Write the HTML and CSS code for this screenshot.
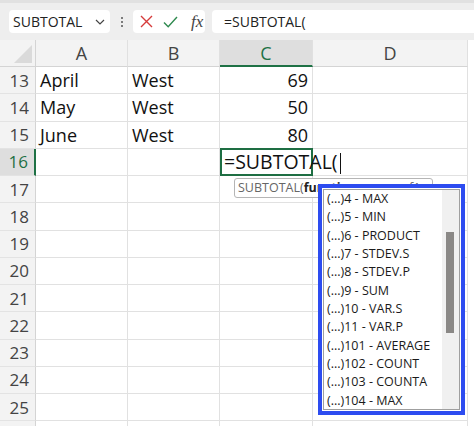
FILE: index.html
```html
<!DOCTYPE html>
<html lang="en">
<head>
    <meta charset="UTF-8">
    <meta name="viewport" content="width=device-width, initial-scale=1.0">
    <title>SUBTOTAL</title>
    <link rel="stylesheet" href="styles.css">
</head>
<body>
    <div class="toolbar">
        <div class="name-box">
            <span>SUBTOTAL</span>
            <svg class="chevron" width="10" height="6" viewBox="0 0 10 6"><path d="M1 1l4 4 4-4" fill="none" stroke="#444" stroke-width="1.2"/></svg>
        </div>
        <div class="grip">
            <span></span><span></span><span></span>
        </div>
        <div class="fx-box">
            <svg width="13" height="13" viewBox="0 0 13 13"><path d="M1 1l11 11M12 1L1 12" fill="none" stroke="#d63b3b" stroke-width="1.4"/></svg>
            <svg width="15" height="12" viewBox="0 0 15 12"><path d="M1 6.5l4.2 4.3L14 1" fill="none" stroke="#2f8a4f" stroke-width="1.4"/></svg>
            <span class="fx">fx</span>
        </div>
        <div class="formula">=SUBTOTAL(</div>
    </div>

    <div class="sheet">
        <div class="corner"><div class="tri"></div></div>
        <div class="col-head">A</div>
        <div class="col-head">B</div>
        <div class="col-head selected">C</div>
        <div class="col-head">D</div>

        <div class="row-head">13</div><div class="cell">April</div><div class="cell">West</div><div class="cell num">69</div><div class="cell"></div>
        <div class="row-head">14</div><div class="cell">May</div><div class="cell">West</div><div class="cell num">50</div><div class="cell"></div>
        <div class="row-head">15</div><div class="cell">June</div><div class="cell">West</div><div class="cell num">80</div><div class="cell"></div>
        <div class="row-head selected">16</div><div class="cell"></div><div class="cell"></div><div class="cell active">=SUBTOTAL(<span class="caret"></span></div><div class="cell"></div>
        <div class="row-head">17</div><div class="cell"></div><div class="cell"></div><div class="cell"></div><div class="cell"></div>
        <div class="row-head">18</div><div class="cell"></div><div class="cell"></div><div class="cell"></div><div class="cell"></div>
        <div class="row-head">19</div><div class="cell"></div><div class="cell"></div><div class="cell"></div><div class="cell"></div>
        <div class="row-head">20</div><div class="cell"></div><div class="cell"></div><div class="cell"></div><div class="cell"></div>
        <div class="row-head">21</div><div class="cell"></div><div class="cell"></div><div class="cell"></div><div class="cell"></div>
        <div class="row-head">22</div><div class="cell"></div><div class="cell"></div><div class="cell"></div><div class="cell"></div>
        <div class="row-head">23</div><div class="cell"></div><div class="cell"></div><div class="cell"></div><div class="cell"></div>
        <div class="row-head">24</div><div class="cell"></div><div class="cell"></div><div class="cell"></div><div class="cell"></div>
        <div class="row-head">25</div><div class="cell"></div><div class="cell"></div><div class="cell"></div><div class="cell"></div>
        <div class="row-head"></div><div class="cell"></div><div class="cell"></div><div class="cell"></div><div class="cell"></div>
    </div>

    <div class="tooltip">SUBTOTAL(<b>function_num</b>, ref1, ...)</div>

    <div class="dropdown">
        <div class="list-box">
            <ul class="items">
                <li>(...)4 - MAX</li>
                <li>(...)5 - MIN</li>
                <li>(...)6 - PRODUCT</li>
                <li>(...)7 - STDEV.S</li>
                <li>(...)8 - STDEV.P</li>
                <li>(...)9 - SUM</li>
                <li>(...)10 - VAR.S</li>
                <li>(...)11 - VAR.P</li>
                <li>(...)101 - AVERAGE</li>
                <li>(...)102 - COUNT</li>
                <li>(...)103 - COUNTA</li>
                <li>(...)104 - MAX</li>
            </ul>
            <div class="scrollbar"><div class="thumb"></div></div>
        </div>
    </div>
</body>
</html>
```

FILE: styles.css
```css
body {
    margin: 0;
    padding: 0;
    width: 474px;
    height: 426px;
    overflow: hidden;
    background-color: #ffffff;
    font-family: "Open Sans", "Noto Sans", sans-serif;
    color: #111;
    position: relative;
}

.toolbar {
    height: 40px;
    box-sizing: border-box;
    background-color: #eeeeee;
    border-top: 3px solid #e1e1e1;
    display: flex;
    align-items: flex-start;
    padding-top: 7px;
    padding-left: 9px;
}

.name-box {
    width: 101px;
    height: 23px;
    background-color: #fff;
    border-radius: 4px;
    display: flex;
    align-items: center;
    justify-content: space-between;
    padding: 0 5px 0 4px;
    box-sizing: border-box;
    font-size: 14px;
    color: #222;
}

.grip {
    width: 23px;
    height: 23px;
    display: flex;
    flex-direction: column;
    align-items: center;
    justify-content: center;
    gap: 2px;
}

.grip span {
    width: 2px;
    height: 2px;
    border-radius: 1px;
    background-color: #555;
}

.fx-box {
    width: 72px;
    height: 23px;
    background-color: #fff;
    border-radius: 4px;
    display: flex;
    align-items: center;
    padding-left: 7px;
    gap: 10px;
    box-sizing: border-box;
}

.fx {
    font-family: "Liberation Serif", serif;
    font-style: italic;
    font-size: 17px;
    color: #444;
    margin-left: 3px;
}

.formula {
    flex-grow: 1;
    margin-left: 7px;
    height: 23px;
    background-color: #fff;
    border-radius: 4px 0 0 4px;
    font-size: 14px;
    line-height: 23px;
    padding-left: 12px;
    color: #222;
}

.sheet {
    display: grid;
    width: 468px;
    height: 386px;
    overflow: hidden;
    grid-template-columns: 36px 92px 92px 93px 155px;
    grid-template-rows: 27px repeat(14, 27.25px);
}

.corner,
.col-head,
.row-head {
    background-color: #f3f3f3;
    color: #444;
    box-sizing: border-box;
    display: flex;
    align-items: center;
    justify-content: center;
    font-size: 18px;
}

.corner {
    border-bottom: 1px solid #d4d4d4;
    border-right: 1px solid #d4d4d4;
    position: relative;
}

.corner .tri {
    position: absolute;
    right: 3px;
    bottom: 3px;
    width: 0;
    height: 0;
    border-left: 18px solid transparent;
    border-bottom: 18px solid #dadada;
}

.col-head {
    border-bottom: 1px solid #d4d4d4;
    border-right: 1px solid #e0e0e0;
}

.col-head.selected {
    background-color: #dedede;
    color: #1e7145;
    border-bottom: 2px solid #1e7145;
}

.row-head {
    border-right: 1px solid #d4d4d4;
    border-bottom: 1px solid #e3e3e3;
    justify-content: flex-end;
    padding-right: 6px;
    font-size: 17px;
}

.row-head.selected {
    background-color: #dedede;
    color: #1e7145;
    border-right: 2px solid #1e7145;
}

.cell {
    box-sizing: border-box;
    border-right: 1px solid #e1e1e1;
    border-bottom: 1px solid #e1e1e1;
    font-size: 18px;
    line-height: 26px;
    padding: 0 4px;
    white-space: nowrap;
}

.cell.num {
    text-align: right;
}

.cell.active {
    border: 2px solid #1e6e43;
    padding-left: 2px;
    font-size: 19.5px;
    line-height: 23px;
    overflow: visible;
    position: relative;
    z-index: 2;
    margin-top: -1px;
}

.caret {
    display: inline-block;
    width: 1px;
    height: 21px;
    background-color: #111;
    vertical-align: middle;
    margin-left: 2px;
}

.tooltip {
    position: absolute;
    left: 234px;
    top: 178px;
    width: 199px;
    height: 20px;
    box-sizing: border-box;
    background-color: #fff;
    border: 1px solid #b5b5b5;
    border-radius: 3px;
    font-size: 12.5px;
    line-height: 18px;
    color: #666;
    padding-left: 3px;
    white-space: nowrap;
    overflow: hidden;
    z-index: 3;
}

.tooltip b {
    color: #222;
}

.dropdown {
    position: absolute;
    left: 318px;
    top: 184px;
    width: 147px;
    height: 231px;
    box-sizing: border-box;
    border: 4px solid #2d4cf0;
    background-color: #fff;
    padding: 1px;
    z-index: 4;
}

.list-box {
    height: 100%;
    box-sizing: border-box;
    border: 1px solid #9f9f9f;
    display: flex;
    overflow: hidden;
}

.items {
    list-style-type: none;
    margin: 0;
    padding: 0 0 0 3px;
    flex-grow: 1;
}

.items li {
    font-size: 12.5px;
    line-height: 18.35px;
    color: #1a1a1a;
    white-space: nowrap;
}

.scrollbar {
    width: 17px;
    background-color: #f0f0f0;
    position: relative;
}

.thumb {
    position: absolute;
    left: 4px;
    top: 42px;
    width: 8px;
    height: 101px;
    background-color: #8a8886;
}
```
